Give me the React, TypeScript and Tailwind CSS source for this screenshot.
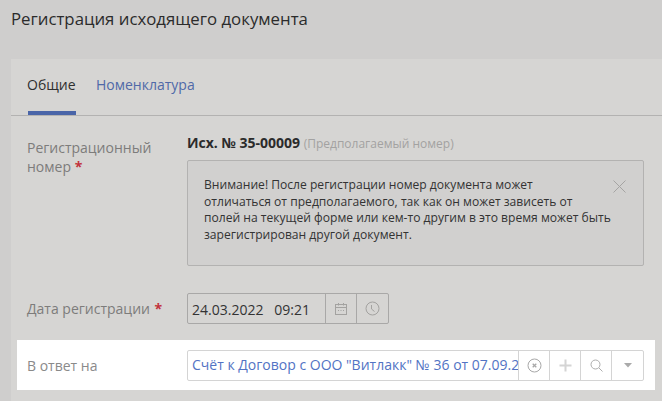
import React from "react";

function CalendarIcon() {
  return (
    <svg width="14" height="14" viewBox="0 0 14 14" fill="none" stroke="#a3a2a0" strokeWidth="1">
      <rect x="1.5" y="2.5" width="11" height="10" />
      <path d="M1.5 5.5h11M4.5 1v2.5M9.5 1v2.5" />
      <path d="M4 8.5h1M6.5 8.5h1M9 8.5h1" />
    </svg>
  );
}

function ClockIcon() {
  return (
    <svg width="15" height="15" viewBox="0 0 15 15" fill="none" stroke="#a3a2a0" strokeWidth="1">
      <circle cx="7.5" cy="7.5" r="6.5" />
      <path d="M6.5 4v4l3 2.5" />
    </svg>
  );
}

function ClearIcon() {
  return (
    <svg width="15" height="15" viewBox="0 0 15 15" fill="none" stroke="#a8a8a8" strokeWidth="1">
      <circle cx="7.5" cy="7.5" r="6.5" />
      <path d="M5.7 5.7l3.6 3.6M9.3 5.7l-3.6 3.6" strokeWidth="1.3" />
    </svg>
  );
}

function PlusIcon() {
  return (
    <svg width="13" height="13" viewBox="0 0 13 13" fill="none" stroke="#d4d4d4" strokeWidth="2">
      <path d="M6.5 0.5v12M0.5 6.5h12" />
    </svg>
  );
}

function SearchIcon() {
  return (
    <svg width="13" height="13" viewBox="0 0 13 13" fill="none" stroke="#adadad" strokeWidth="1">
      <circle cx="5.5" cy="5.5" r="4.5" />
      <path d="M9 9l3.5 3.5" />
    </svg>
  );
}

function CaretIcon() {
  return (
    <svg width="8" height="5" viewBox="0 0 8 5" fill="#aaaaaa">
      <path d="M0 0h8L4 4.5z" />
    </svg>
  );
}

export default function App() {
  return (
    <div className="w-[662px] h-[401px] overflow-hidden bg-[#cfcecd] font-['Open_Sans',sans-serif]">
      <h1 className="pl-[11px] pt-[7px] h-[59px] text-[16.8px] leading-[24px] text-[#2b2b2b] font-normal">
        Регистрация исходящего документа
      </h1>
      <div className="ml-[11px] h-[342px] bg-[#d6d5d3]">
        <div className="flex h-[57px] border-b border-[#b3b2b1] pl-[16px] gap-[20px] text-[14px]">
          <div className="relative h-[56px] w-[49px] pt-[15px] leading-[22px] text-[#2f2f2f]">
            Общие
            <span className="absolute bottom-0 left-[1px] right-0 h-[4px] bg-[#4a65a8]" />
          </div>
          <div className="pt-[15px] leading-[22px] text-[#5069a8]">Номенклатура</div>
        </div>

        <div className="flex pl-[16px] pt-[17px]">
          <div className="w-[160px] pt-[5px] text-[14px] leading-[19px] text-[#7d7c7b]">
            Регистрационный
            <br />
            номер <span className="text-[#c2323c] font-bold">*</span>
          </div>
          <div className="w-[457px]">
            <div className="h-[20px] text-[14px] leading-[20px] text-[#2b2b2b]">
              <span className="font-bold">Исх. № 35-00009</span>{" "}
              <span className="text-[12px] text-[#a3a2a1]">(Предполагаемый номер)</span>
            </div>
            <div className="flex mt-[7px] h-[106px] justify-between rounded-[2px] border border-[#b3b2b1] bg-[#d1d0cf] pl-[16px] pr-[17px] pt-[16px]">
              <p className="whitespace-nowrap text-[12.1px] leading-[16.6px] text-[#333333]">
                Внимание! После регистрации номер документа может
                <br />
                отличаться от предполагаемого, так как он может зависеть от
                <br />
                полей на текущей форме или кем-то другим в это время может быть
                <br />
                зарегистрирован другой документ.
              </p>
              <svg className="mt-[3px] shrink-0" width="13" height="13" viewBox="0 0 13 13" fill="none" stroke="#a5a4a3" strokeWidth="1">
                <path d="M0.5 0.5l12 12M12.5 0.5l-12 12" />
              </svg>
            </div>
          </div>
        </div>

        <div className="flex items-center pl-[16px] mt-[27px] h-[31px]">
          <div className="w-[160px] text-[14px] leading-[22px] pt-[1px] text-[#7d7c7b]">
            Дата регистрации <span className="ml-[1px] text-[#c2323c] font-bold">*</span>
          </div>
          <div className="flex h-[31px] w-[202px] rounded-[2px] border border-[#a9a8a7] text-[#333333]">
            <div className="w-[137px] pl-[4px] pt-[1px] text-[14px] leading-[29px] whitespace-pre">24.03.2022   09:21</div>
            <div className="flex w-[31px] items-center justify-center border-l border-[#a9a8a7]"><CalendarIcon /></div>
            <div className="flex w-[32px] items-center justify-center border-l border-[#a9a8a7]"><ClockIcon /></div>
          </div>
        </div>

        <div className="flex items-center ml-[6px] mt-[16px] mr-[7px] h-[50px] bg-white pl-[10px] pr-[11px]">
          <div className="w-[160px] text-[14px] text-[#8a8a8a]">В ответ на</div>
          <div className="flex h-[31px] w-[457px] rounded-[2px] border border-[#d4d4d4]">
            <div className="w-[331px] overflow-hidden whitespace-nowrap pl-[4px] text-[14px] leading-[27px] text-[#5273c4]">
              Счёт к Договор с ООО "Витлакк" № 36 от 07.09.2021
            </div>
            <div className="flex w-[31px] items-center justify-center border-l border-[#d4d4d4]"><ClearIcon /></div>
            <div className="flex w-[31px] items-center justify-center border-l border-[#d4d4d4]"><PlusIcon /></div>
            <div className="flex w-[31px] items-center justify-center border-l border-[#d4d4d4]"><SearchIcon /></div>
            <div className="flex w-[32px] items-center justify-center border-l border-[#d4d4d4]"><CaretIcon /></div>
          </div>
        </div>
      </div>
    </div>
  );
}
